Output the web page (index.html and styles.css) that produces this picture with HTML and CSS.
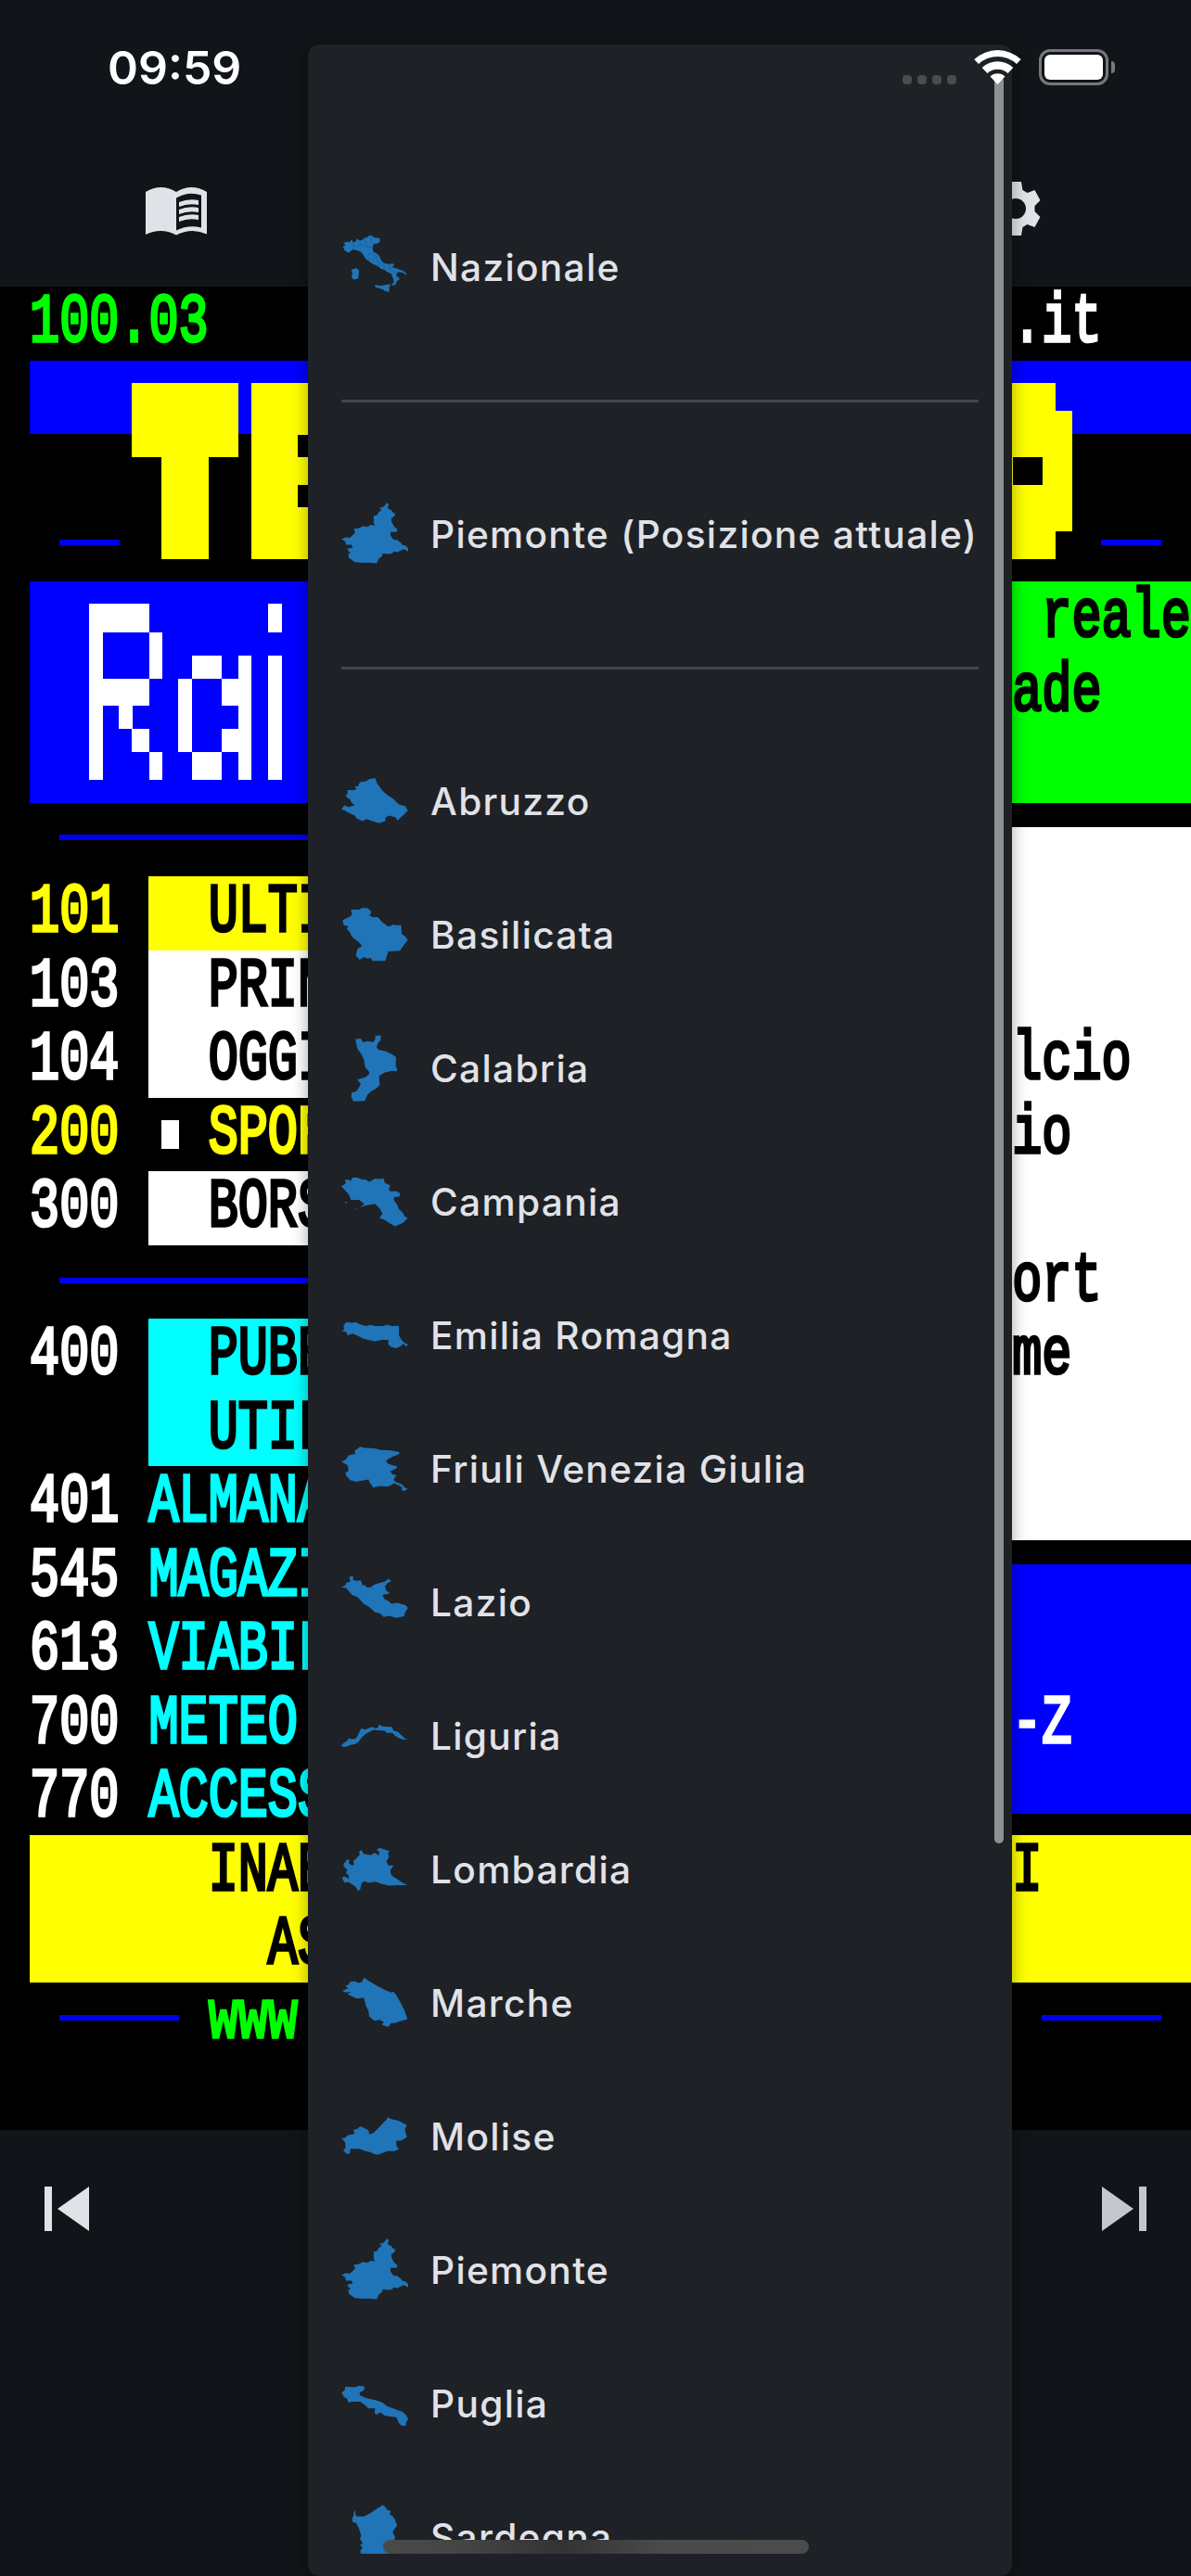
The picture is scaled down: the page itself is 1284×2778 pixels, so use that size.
FILE: index.html
```html
<!DOCTYPE html>
<html lang="it">
<head>
<meta charset="utf-8">
<title>Televideo</title>
<link rel="stylesheet" href="styles.css">
</head>
<body>
<div class="app">
  <header class="toolbar">
    <svg class="icon-book" viewBox="0 0 66 52"><path fill-rule="evenodd" d="M0 5Q16.500-5 33 5Q49.500-5 66 5V50.500Q49.500 43 33 51.500Q16.500 43 0 51ZM33 11.500V46.500Q46 40 60 43.500V8.500Q46 4 33 11.500Z"/><path d="M36 16Q46 12 57 14V19Q46 17 36 21ZM36 24Q46 20 57 22V27Q46 25 36 29ZM36 32Q46 28 57 30V35Q46 33 36 37Z"/></svg>
    <svg class="icon-gear" viewBox="0 0 58 60"><path fill-rule="evenodd" d="M21 1H37L38.500 10L43.500 13L51.500 10L57.500 21L51.500 27V33L57.500 39L51.500 50L43.500 47L38.500 50L37 59H21L19.500 50L14.500 47L6.500 50L.5 39L6.500 33V27L.5 21L6.500 10L14.500 13L19.500 10ZM31 19A11 11 0 1 0 31 41A11 11 0 1 0 31 19Z"/></svg>
  </header>

  <main class="teletext">
    <div class="block blue band"></div>
    <div class="block blue logo-box"></div>
    <div class="block green promo"></div>
    <div class="block yellow top-news"></div>
    <div class="block white news"></div>
    <div class="block white finance"></div>
    <div class="block cyan public"></div>
    <div class="block white right-index"></div>
    <div class="block blue right-az"></div>
    <div class="block yellow footer-ad"></div>

    <svg class="mosaic" viewBox="0 0 1284 1988" shape-rendering="crispEdges">
      <g transform="translate(0 -309)">
        <g fill="#ff0">
          <rect x="142" y="413" width="115" height="80"/><rect x="174" y="493" width="51" height="110"/>
          <rect x="271" y="413" width="50" height="190"/><rect x="321" y="413" width="30" height="56"/><rect x="321" y="493" width="30" height="30"/><rect x="321" y="547" width="30" height="56"/>
          <rect x="1070" y="413" width="22" height="190"/><rect x="1092" y="413" width="32" height="80"/><rect x="1092" y="523" width="32" height="80"/><rect x="1124" y="413" width="14" height="190"/><rect x="1138" y="443" width="18" height="130"/>
        </g>
        <g fill="#fff">
          <rect x="96" y="651" width="65" height="31"/><rect x="96" y="682" width="14.500" height="159"/><rect x="161" y="682" width="14" height="50"/><rect x="110" y="732" width="51" height="29"/><rect x="128" y="761" width="14.500" height="25"/><rect x="142" y="786" width="19" height="25"/><rect x="161" y="811" width="14" height="30"/>
          <rect x="207" y="707" width="32" height="25"/><rect x="257" y="707" width="14" height="134"/><rect x="192" y="732" width="15" height="79"/><rect x="239" y="732" width="18" height="29"/><rect x="239" y="786" width="18" height="25"/><rect x="207" y="811" width="32" height="30"/>
          <rect x="289" y="651" width="15" height="31"/><rect x="289" y="707" width="15" height="134"/>
          <rect x="174" y="1208" width="19" height="31"/>
        </g>
        <g fill="#0000f0">
          <rect x="64" y="582" width="65" height="6"/><rect x="1187" y="582" width="65" height="6"/>
          <rect x="64" y="900" width="280" height="6"/><rect x="64" y="1378" width="280" height="6"/>
          <rect x="64" y="2173" width="129" height="6"/><rect x="1123" y="2173" width="129" height="6"/>
        </g>
      </g>
    </svg>

    <span class="t r0 c1 lime">100.03</span><span class="t r0 c34">.it</span>
    <span class="t r4 c35 ink">reale</span>
    <span class="t r5 c34 ink">ade</span>
    <span class="t r8 c1 gold">101</span><span class="t r8 c7 ink">ULTI</span>
    <span class="t r9 c1">103</span><span class="t r9 c7 ink">PRIN</span>
    <span class="t r10 c1">104</span><span class="t r10 c7 ink">OGGI</span><span class="t r10 c34 ink">lcio</span>
    <span class="t r11 c1 gold">200</span><span class="t r11 c7 gold">SPOR</span><span class="t r11 c34 ink">io</span>
    <span class="t r12 c1">300</span><span class="t r12 c7 ink">BORS</span>
    <span class="t r13 c34 ink">ort</span>
    <span class="t r14 c1">400</span><span class="t r14 c7 ink">PUBB</span><span class="t r14 c34 ink">me</span>
    <span class="t r15 c7 ink">UTIL</span>
    <span class="t r16 c1">401</span><span class="t r16 c5 aqua">ALMANA</span>
    <span class="t r17 c1">545</span><span class="t r17 c5 aqua">MAGAZI</span>
    <span class="t r18 c1">613</span><span class="t r18 c5 aqua">VIABIL</span>
    <span class="t r19 c1">700</span><span class="t r19 c5 aqua">METEO</span><span class="t r19 c34">-Z</span>
    <span class="t r20 c1">770</span><span class="t r20 c5 aqua">ACCESS</span>
    <span class="t r21 c7 ink">INAB</span><span class="t r21 c34 ink">I</span>
    <span class="t r22 c9 ink">AS</span>
    <span class="t r23 c7 lime">www.</span>
  </main>

  <nav class="pager">
    <svg class="skip" viewBox="0 0 48 48"><path d="M0 0H8V48H0ZM48 0V48L14 24Z"/></svg>
    <svg class="skip next" viewBox="0 0 48 48"><path d="M40 0H48V48H40ZM0 0V48L34 24Z"/></svg>
  </nav>
</div>

<aside class="drawer">
  <div class="list">
    <div class="item"><svg class="map" viewBox="78.4 66 148.5 216" preserveAspectRatio="none"><path d="M82 108L88 103L83 96L91 92L97 94L101 84L104 94L110 92L113 82L118 87L124 88L129 80L136 78L139 73L147 72L151 79L164 80L164 93L158 98L152 99L148 105L149 124L157 130L163 138L167 153L174 162L185 164L194 163L196 168L191 174L203 179L216 187L223 194L223 200L215 192L206 190L201 195L201 204L207 208L207 215L202 219L199 231L192 234L190 229L195 225L194 213L189 195L183 192L174 183L166 179L160 172L149 164L141 157L132 147L126 132L121 124L113 121L107 117L101 120L95 128L86 121ZM100 183L112 177L118 185L116 211L106 215L101 207L103 194ZM153 231L165 235L189 229L185 238L185 254L177 253L170 246L154 239Z"/><path class="borders" d="M103 94L108 108L103 113M118 88L122 102L112 109M123 102L139 109L148 109M130 82L131 94L137 101M145 76L144 91L151 98M143 127L137 139L142 152M149 128L153 141L147 158M158 134L158 154L165 164L160 172M169 162L175 170L172 181M187 165L182 178L191 177M184 182L200 192"/></svg><span>Nazionale</span></div>
    <div class="rule"></div>
    <div class="item"><svg class="map" viewBox="106.4 575.2 201.6 195.3" preserveAspectRatio="none"><path d="M107 687L121 682L131 684L136 680L148 669L144 657L158 656L172 649L183 652L197 646L208 648L204 641L204 620L214 617L220 608L228 604L222 596L235 592L243 582L249 583L247 598L257 602L260 608L270 614L266 621L257 627L258 637L266 651L276 659L274 666L262 667L255 666L255 677L264 689L274 690L286 698L291 705L301 707L308 715L308 724L296 717L286 720L276 726L266 724L255 731L231 730L229 738L220 744L213 758L187 756L167 757L146 754L129 742L127 732L134 729L125 719L126 715L141 712L137 704L120 704L119 695Z"/></svg><span>Piemonte (Posizione attuale)</span></div>
    <div class="rule"></div>
    <div class="item"><svg class="map" viewBox="54 41.5 216 166" preserveAspectRatio="none"><path d="M54 145L64 135L76 139L97 135L87 128L82 120L73 116L68 109L74 106L74 97L97 97L103 94L97 88L108 87L114 77L134 75L144 70L163 67L170 80L185 97L202 109L222 119L239 132L261 137L269 148L253 160L235 173L230 165L209 160L197 165L196 174L176 179L160 175L148 173L137 169L122 174L103 167L97 160L75 152L64 147Z"/></svg><span>Abruzzo</span></div>
    <div class="item"><svg class="map" viewBox="54 373.6 216 166" preserveAspectRatio="none"><path d="M58 420L84 411L89 405L84 395L102 394L109 395L122 390L140 391L152 400L145 408L154 413L172 413L184 424L205 436L217 434L219 431L230 433L248 433L249 455L260 460L269 470L258 480L243 497L206 498L196 522L168 522L154 522L150 514L137 516L128 512L113 519L101 509L106 492L121 485L109 474L96 467L87 460L81 450L72 443L76 435L62 433Z"/></svg><span>Basilicata</span></div>
    <div class="item"><svg class="map" viewBox="54 705.7 216 166" preserveAspectRatio="none"><path d="M99 716L117 715L124 724L140 721L156 724L163 718L164 708L182 707L181 719L172 727L168 736L175 743L197 746L218 754L231 761L230 784L235 791L232 797L219 795L195 799L176 808L178 831L167 839L149 847L138 855L130 870L93 871L86 861L87 850L104 845L117 828L105 817L132 811L145 802L142 795L131 787L127 768L120 755L106 740Z"/></svg><span>Calabria</span></div>
    <div class="item"><svg class="map" viewBox="54 1037.700 216 166" preserveAspectRatio="none"><path d="M54 1082L68 1075L66 1066L79 1066L83 1070L90 1061L105 1060L117 1064L133 1066L145 1071L163 1063L179 1064L190 1062L195 1074L212 1080L207 1090L213 1095L231 1094L245 1100L241 1108L225 1109L223 1115L235 1129L240 1139L252 1147L259 1157L269 1161L252 1174L228 1182L208 1173L195 1166L177 1161L187 1150L177 1137L163 1126L127 1131L115 1135L128 1126L112 1116L85 1116L78 1102L67 1093ZM64 1121L75 1122L68 1125ZM99 1136L104 1137L102 1139Z"/></svg><span>Campania</span></div>
    <div class="item"><svg class="map" viewBox="54 1369.800 216 166" preserveAspectRatio="none"><path d="M54 1442L63 1439L61 1429L68 1421L78 1420L87 1422L99 1420L113 1425L133 1430L149 1427L163 1430L190 1430L202 1426L217 1430L240 1429L240 1452L249 1465L259 1472L269 1476L265 1481L254 1474L246 1480L231 1485L213 1481L205 1474L207 1465L187 1464L163 1468L143 1465L124 1461L103 1453L91 1449L74 1453L70 1445Z"/></svg><span>Emilia Romagna</span></div>
    <div class="item"><svg class="map" viewBox="54 41.5 216 166" preserveAspectRatio="none"><path d="M54 107L69 101L77 91L99 87L97 80L115 69L125 72L163 74L178 77L217 79L242 83L240 89L224 93L208 99L198 105L205 112L220 116L235 118L231 124L212 131L219 138L232 140L223 152L229 157L250 163L260 172L269 174L258 180L248 177L251 172L239 165L224 160L216 165L203 169L178 167L157 171L144 156L143 151L120 154L101 157L83 153L69 141L68 133L76 131L77 122L72 114Z"/></svg><span>Friuli Venezia Giulia</span></div>
    <div class="item"><svg class="map" viewBox="54 373.6 216 166" preserveAspectRatio="none"><path d="M54 419L67 414L71 407L83 406L80 393L92 391L92 401L103 403L117 402L123 414L132 414L135 419L149 419L160 413L178 408L195 405L206 398L216 404L204 408L195 417L199 427L212 434L187 438L193 448L206 453L216 460L235 458L250 461L263 464L269 471L260 482L257 491L230 495L209 490L191 493L180 484L161 481L154 475L144 468L128 461L118 453L107 444L88 438L79 429L69 421Z"/></svg><span>Lazio</span></div>
    <div class="item"><svg class="map" viewBox="54 705.7 216 166" preserveAspectRatio="none"><path d="M54 813L60 807L74 800L77 794L85 797L100 796L107 788L113 778L118 770L131 773L152 766L166 770L174 767L175 760L187 765L218 767L223 776L235 778L250 788L259 795L269 798L254 798L240 794L229 789L219 781L201 781L194 776L173 775L158 774L147 778L132 784L120 793L109 804L99 809L82 812L69 816L57 816Z"/></svg><span>Liguria</span></div>
    <div class="item"><svg class="map" viewBox="54 1037.700 216 166" preserveAspectRatio="none"><path d="M56 1142L63 1138L79 1144L77 1135L69 1130L73 1121L61 1113L62 1105L68 1102L71 1096L80 1097L78 1105L88 1111L96 1108L92 1100L101 1094L113 1085L112 1075L119 1073L126 1082L149 1085L163 1079L174 1086L177 1077L168 1072L177 1067L189 1070L210 1075L205 1081L208 1090L200 1101L206 1111L224 1111L213 1121L214 1133L222 1139L235 1145L252 1154L269 1160L238 1160L207 1161L181 1156L164 1151L144 1154L128 1150L119 1156L115 1171L108 1174L99 1163L85 1156L76 1152L65 1154Z"/></svg><span>Lombardia</span></div>
    <div class="item"><svg class="map" viewBox="54 1369.800 216 166" preserveAspectRatio="none"><path d="M57 1423L76 1416L66 1410L78 1407L82 1400L99 1399L109 1403L120 1401L127 1390L143 1398L169 1410L194 1420L215 1427L223 1425L234 1436L249 1457L259 1473L268 1493L246 1498L227 1503L215 1503L205 1513L185 1507L191 1500L179 1495L161 1497L150 1490L144 1486L142 1473L133 1459L127 1440L103 1442L91 1437L74 1431L86 1425L68 1427Z"/></svg><span>Marche</span></div>
    <div class="item"><svg class="map" viewBox="106.4 184.500 201.6 195.3" preserveAspectRatio="none"><path d="M107 287L117 286L127 278L147 274L142 263L155 260L163 252L175 257L188 264L191 276L203 272L216 260L235 240L242 234L246 226L257 231L279 236L304 249L298 262L304 284L289 294L272 295L273 311L281 319L267 325L246 325L217 336L203 333L195 328L178 325L163 319L134 318L132 332L122 333L112 322L119 316L118 300Z"/></svg><span>Molise</span></div>
    <div class="item"><svg class="map" viewBox="106.4 575.2 201.6 195.3" preserveAspectRatio="none"><path d="M107 687L121 682L131 684L136 680L148 669L144 657L158 656L172 649L183 652L197 646L208 648L204 641L204 620L214 617L220 608L228 604L222 596L235 592L243 582L249 583L247 598L257 602L260 608L270 614L266 621L257 627L258 637L266 651L276 659L274 666L262 667L255 666L255 677L264 689L274 690L286 698L291 705L301 707L308 715L308 724L296 717L286 720L276 726L266 724L255 731L231 730L229 738L220 744L213 758L187 756L167 757L146 754L129 742L127 732L134 729L125 719L126 715L141 712L137 704L120 704L119 695Z"/></svg><span>Piemonte</span></div>
    <div class="item"><svg class="map" viewBox="106.4 965.900 201.6 195.3" preserveAspectRatio="none"><path d="M107 1032L117 1024L118 1014L147 1016L158 1012L174 1013L177 1021L171 1027L162 1031L162 1039L181 1047L214 1055L231 1061L244 1071L272 1081L290 1087L303 1098L308 1110L302 1119L301 1129L286 1127L279 1119L273 1104L260 1102L237 1099L225 1089L213 1096L207 1092L208 1078L188 1078L180 1070L164 1058L142 1058L127 1060L123 1048L115 1045Z"/></svg><span>Puglia</span></div>
    <div class="item"><svg class="map" viewBox="106.4 1356.600 201.6 195.3" preserveAspectRatio="none"><path d="M139 1399L145 1389L143 1384L150 1374L148 1386L153 1394L175 1394L195 1384L212 1372L226 1365L229 1360L238 1365L243 1373L256 1379L252 1387L262 1394L267 1401L275 1420L261 1439L269 1455L263 1475L263 1540L165 1540L166 1500L162 1499L170 1485L163 1478L171 1472L163 1461L166 1448L159 1428L151 1413L141 1411Z"/></svg><span>Sardegna</span></div>
  </div>
  <div class="scrollbar"></div>
</aside>

<div class="status">
  <span class="clock">09:59</span>
  <span class="dots"><i></i><i></i><i></i><i></i></span>
  <svg class="wifi" viewBox="0 0 51 37"><path d="M.3 10A37 37 0 0 1 50.700 10L46 15.100A30 30 0 0 0 5 15.100ZM8.700 18.900A24.700 24.700 0 0 1 42.300 18.900L36.600 25.100A16.300 16.300 0 0 0 14.400 25.100ZM17.500 28.400A11.700 11.700 0 0 1 33.500 28.400L25.500 37Z"/></svg>
  <span class="battery"></span>
  <span class="nub"></span>
</div>
<div class="home"></div>
</body>
</html>
```
FILE: styles.css
```css
* { box-sizing: border-box; }
body {
  margin: 0;
  width: 1284px;
  height: 2778px;
  position: relative;
  overflow: hidden;
  background: #111418;
  color: #e1e2e8;
  font-family: Inter, "Liberation Sans", sans-serif;
}
.app { display: flex; flex-direction: column; height: 2778px; }

.toolbar {
  height: 309px;
  padding: 195px 162px 0 157px;
  display: flex;
  justify-content: space-between;
  fill: #e1e2e8;
}
.icon-book { width: 66px; height: 52px; margin-top: 7px; }
.icon-gear { width: 58px; height: 60px; }

/* 40 columns, 25 text rows; each text row is three mosaic rows */
.teletext {
  flex: none;
  height: 1988px;
  background: #000;
  color: #fff;
  display: grid;
  grid-template-columns: repeat(40, 32.1px);
  grid-template-rows: repeat(75, 26.507px);
}
.mosaic { grid-area: 1 / 1 / -1 / -1; width: 1284px; height: 1988px; }
.blue { background: #00f; }
.green { background: #0f0; }
.yellow { background: #ff0; }
.white { background: #fff; }
.cyan { background: #0ff; }
.band { grid-area: 4 / 2 / 7 / -1; }
.logo-box { grid-area: 13 / 2 / 22 / 20; }
.promo { grid-area: 13 / 20 / 22 / -1; }
.top-news { grid-area: 25 / 6 / 28 / 20; }
.news { grid-area: 28 / 6 / 34 / 20; }
.finance { grid-area: 37 / 6 / 40 / 20; }
.public { grid-area: 43 / 6 / 49 / 20; }
.right-index { grid-area: 23 / 22 / 52 / -1; }
.right-az { grid-area: 53 / 22 / 63 / -1; height: 269px; }
.footer-ad { grid-area: 64 / 2 / 70 / -1; }

.t {
  font: 53.49px/54px "Liberation Mono", monospace;
  -webkit-text-stroke: 2.6px currentColor;
  white-space: pre;
  transform: scaleY(1.4);
  transform-origin: 0 0;
  margin-top: 2px;
  height: 54px;
  width: 0;
}
.ink { color: #000; }
.lime { color: #0f0; }
.gold { color: #ff0; }
.aqua { color: #0ff; }
.c1 { grid-column: 2; } .c5 { grid-column: 6; } .c7 { grid-column: 8; }
.c9 { grid-column: 10; } .c34 { grid-column: 35; } .c35 { grid-column: 36; }
.r0 { grid-row: 1; } .r4 { grid-row: 13; } .r5 { grid-row: 16; }
.r8 { grid-row: 25; } .r9 { grid-row: 28; } .r10 { grid-row: 31; }
.r11 { grid-row: 34; } .r12 { grid-row: 37; } .r13 { grid-row: 40; }
.r14 { grid-row: 43; } .r15 { grid-row: 46; } .r16 { grid-row: 49; }
.r17 { grid-row: 52; } .r18 { grid-row: 55; } .r19 { grid-row: 58; }
.r20 { grid-row: 61; } .r21 { grid-row: 64; } .r22 { grid-row: 67; }
.r23 { grid-row: 70; }
.mosaic, .block { z-index: 0; }
.t { z-index: 1; }

.pager { display: flex; justify-content: space-between; padding: 61px 48px 0; }
.skip { width: 48px; height: 48px; fill: #e1e2e8; }
.skip.next { fill: #c4c6d0; }

.drawer {
  position: absolute;
  left: 332px;
  top: 48px;
  width: 759px;
  height: 2730px;
  z-index: 2;
  border-radius: 12px;
  background: #1e2125;
  box-shadow: 0 3px 18px rgba(0, 0, 0, .35);
  padding: 168px 36px 0;
}
.list { height: 2538px; overflow: hidden; }
.item {
  height: 144px;
  display: flex;
  align-items: center;
  gap: 24px;
  font-size: 40.7px;
  font-weight: 500;
  letter-spacing: 1.28px;
  line-height: 60px;
  white-space: nowrap;
}
.item span { padding-top: 2px; }
.map { flex: none; width: 72px; height: 72px; fill: #2074b8; overflow: hidden; }
.borders { fill: none; stroke: #175688; stroke-width: 1.5; }
.rule { height: 3px; margin: 70.5px 0; background: #43474b; }
.scrollbar {
  position: absolute;
  left: 740px;
  top: 34px;
  width: 10px;
  height: 1906px;
  border-radius: 5px;
  background: #8f9091;
}

.status {
  position: absolute;
  z-index: 3;
  left: 0;
  top: 0;
  width: 1284px;
  height: 141px;
  display: flex;
  align-items: flex-start;
  padding: 53px 0 0 116px;
}
.clock { width: 857px; font-size: 50px; line-height: 40px; font-weight: 600; color: #fff; }
.dots { display: flex; gap: 6px; margin-top: 28px; width: 77px; }
.dots i { width: 10px; height: 10px; border-radius: 4px; background: #4a4d50; }
.wifi { width: 51px; height: 37px; margin-top: 1px; fill: #fff; }
.battery {
  margin-left: 19px;
  width: 75px;
  height: 39px;
  padding: 3px;
  border: 3px solid #77787b;
  border-radius: 12px;
}
.battery::after { content: ""; display: block; height: 27px; border-radius: 6px; background: #fff; }
.nub { margin: 13px 0 0 3px; width: 4px; height: 13px; border-radius: 0 4px 4px 0; background: #77787b; }
.home {
  position: absolute;
  z-index: 3;
  left: 413px;
  top: 2739px;
  width: 459px;
  height: 15px;
  border-radius: 8px;
  background: linear-gradient(90deg, #4a4a4a, #444 20%, #333 42%, #4a4a4a 65%, #4b4b4b);
}
```
